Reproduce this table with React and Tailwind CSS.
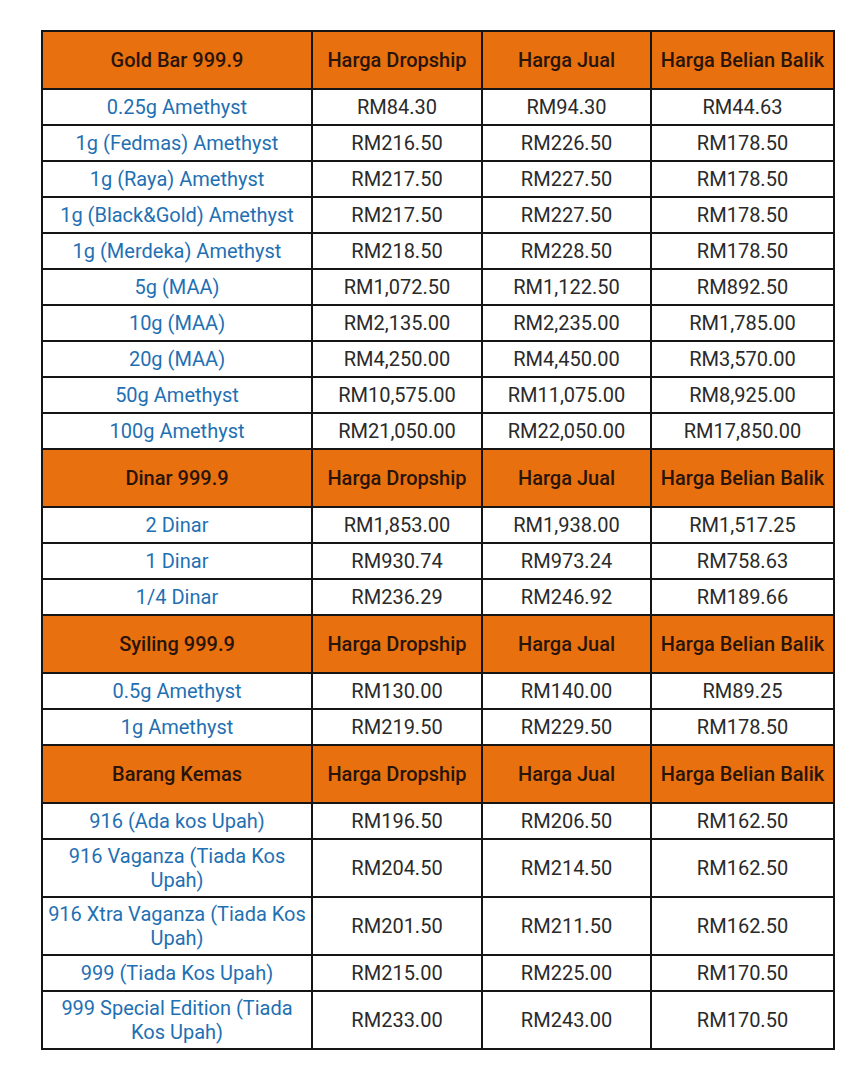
const sections = [
  {
    title: "Gold Bar 999.9",
    rows: [
      ["0.25g Amethyst", "RM84.30", "RM94.30", "RM44.63"],
      ["1g (Fedmas) Amethyst", "RM216.50", "RM226.50", "RM178.50"],
      ["1g (Raya) Amethyst", "RM217.50", "RM227.50", "RM178.50"],
      ["1g (Black&Gold) Amethyst", "RM217.50", "RM227.50", "RM178.50"],
      ["1g (Merdeka) Amethyst", "RM218.50", "RM228.50", "RM178.50"],
      ["5g (MAA)", "RM1,072.50", "RM1,122.50", "RM892.50"],
      ["10g (MAA)", "RM2,135.00", "RM2,235.00", "RM1,785.00"],
      ["20g (MAA)", "RM4,250.00", "RM4,450.00", "RM3,570.00"],
      ["50g Amethyst", "RM10,575.00", "RM11,075.00", "RM8,925.00"],
      ["100g Amethyst", "RM21,050.00", "RM22,050.00", "RM17,850.00"],
    ],
  },
  {
    title: "Dinar 999.9",
    rows: [
      ["2 Dinar", "RM1,853.00", "RM1,938.00", "RM1,517.25"],
      ["1 Dinar", "RM930.74", "RM973.24", "RM758.63"],
      ["1/4 Dinar", "RM236.29", "RM246.92", "RM189.66"],
    ],
  },
  {
    title: "Syiling 999.9",
    rows: [
      ["0.5g Amethyst", "RM130.00", "RM140.00", "RM89.25"],
      ["1g Amethyst", "RM219.50", "RM229.50", "RM178.50"],
    ],
  },
  {
    title: "Barang Kemas",
    rows: [
      ["916 (Ada kos Upah)", "RM196.50", "RM206.50", "RM162.50"],
      ["916 Vaganza (Tiada Kos Upah)", "RM204.50", "RM214.50", "RM162.50"],
      ["916 Xtra Vaganza (Tiada Kos Upah)", "RM201.50", "RM211.50", "RM162.50"],
      ["999 (Tiada Kos Upah)", "RM215.00", "RM225.00", "RM170.50"],
      ["999 Special Edition (Tiada Kos Upah)", "RM233.00", "RM243.00", "RM170.50"],
    ],
  },
];

const headers = ["Harga Dropship", "Harga Jual", "Harga Belian Balik"];

export default function App() {
  return (
    <div className="min-h-screen bg-white pt-[30px] pl-[41px]" style={{ fontFamily: "Roboto, 'Liberation Sans', sans-serif" }}>
      <table className="w-[792px] table-fixed border-collapse border-2 border-[#151515] text-[20px] leading-[24px] font-normal">
        <colgroup>
          <col className="w-[270px]" />
          <col className="w-[170px]" />
          <col className="w-[169px]" />
          <col className="w-[183px]" />
        </colgroup>
        <tbody>
          {sections.map((section) => (
            <Section key={section.title} section={section} />
          ))}
        </tbody>
      </table>
    </div>
  );
}

function Section({ section }) {
  return (
    <>
      <tr className="h-[58px] bg-[#e8700f] text-[#2a140a] font-medium">
        <td className="border-2 border-[#151515] text-center px-0.5">{section.title}</td>
        {headers.map((h) => (
          <td key={h} className="border-2 border-[#151515] text-center px-0.5">{h}</td>
        ))}
      </tr>
      {section.rows.map((row) => (
        <tr key={row[0]} className={row[0].length > 24 ? "h-[58px]" : "h-[36px]"}>
          <td className="border-2 border-[#151515] text-center px-0.5 text-[#1f70b3]">{row[0]}</td>
          {row.slice(1).map((v, i) => (
            <td key={i} className="border-2 border-[#151515] text-center text-[#2a2a2a]">{v}</td>
          ))}
        </tr>
      ))}
    </>
  );
}
